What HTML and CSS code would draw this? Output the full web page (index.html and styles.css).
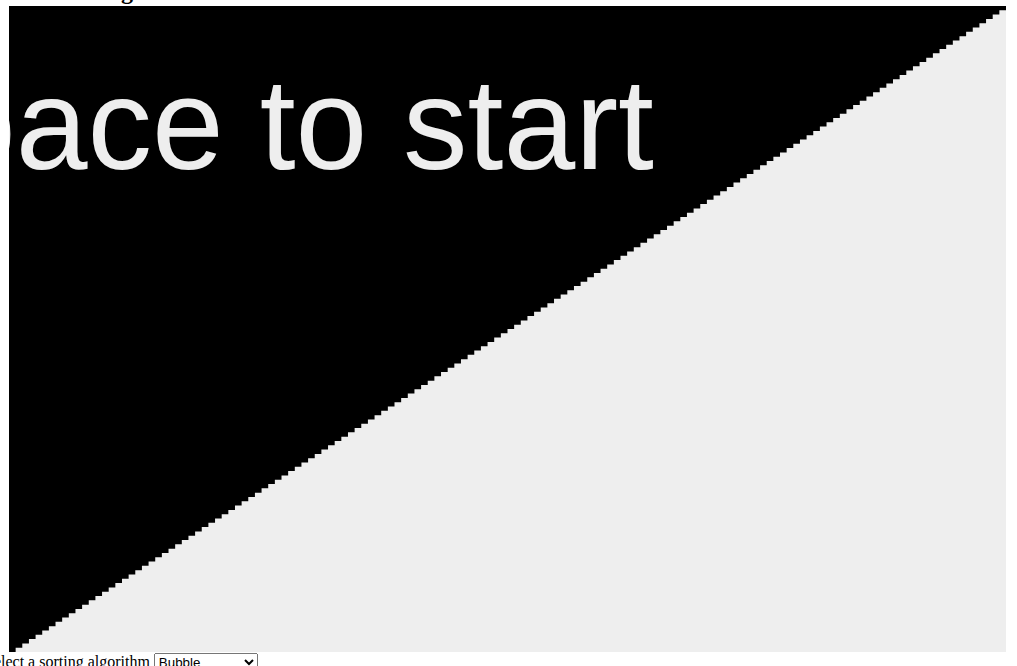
FILE: index.html
```html
<!DOCTYPE html>
<html>
<head>
<meta charset="utf-8">
<title>Sorting Visualizer</title>
<link rel="stylesheet" href="styles.css">
</head>
<body>
<h1 class="title">Sorting Visualizer</h1>
<div class="stage">
  <svg id="board" class="board" width="997" height="646" viewBox="0 0 997 646" xmlns="http://www.w3.org/2000/svg">
    <rect class="board-bg" x="0" y="0" width="997" height="646"></rect>
    <path id="bars" class="bars" d=""></path>
    <text class="prompt" x="-495" y="163">Press space to start</text>
  </svg>
</div>
<div class="controls">
  <label for="algo">Select a sorting algorithm</label>
  <select id="algo" class="algo">
    <option>Bubble</option>
    <option>Insertion</option>
    <option>Selection</option>
    <option>Merge</option>
    <option>Quick</option>
  </select>
</div>
<script src="script.js"></script>
</body>
</html>
```
FILE: styles.css
```css
html, body {
  margin: 0;
  padding: 0;
  background: #fff;
  overflow: hidden;
}
body {
  font-family: "Liberation Serif", "Times New Roman", serif;
  color: #000;
  font-size: 16px;
}
.title {
  font-size: 24px;
  font-weight: bold;
  line-height: 24px;
  margin: -21px 0 3px 0;
  padding-left: 57px;
  white-space: nowrap;
}
.stage {
  padding-left: 9px;
  line-height: 0;
}
.board {
  display: block;
}
.board-bg {
  fill: #000;
}
.bars {
  fill: #eeeeee;
}
.prompt {
  fill: #eeeeee;
  font-family: "Liberation Sans", Arial, sans-serif;
  font-size: 129px;
}
.controls {
  margin-left: -15px;
  margin-top: 1px;
  white-space: nowrap;
  line-height: normal;
}
.algo {
  width: 104px;
  font-family: "Liberation Sans", Arial, sans-serif;
  font-size: 13.333px;
}
```
FILE: script.js
```js
(function () {
  var W = 997, H = 646, N = 150;
  var path = document.getElementById('bars');
  var d = 'M0 ' + H;
  for (var i = 0; i < N; i++) {
    var x0 = i * W / N;
    var x1 = (i + 1) * W / N;
    var y = H - i * H / N;
    d += ' L' + x0.toFixed(3) + ' ' + y.toFixed(3) + ' L' + x1.toFixed(3) + ' ' + y.toFixed(3);
  }
  d += ' L' + W + ' ' + H + ' Z';
  path.setAttribute('d', d);
})();
```
